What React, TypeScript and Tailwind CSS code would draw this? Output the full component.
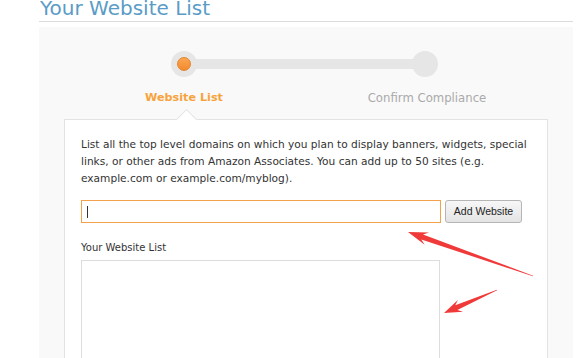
import React from "react";

function arrowPoints(tx: number, ty: number, hx: number, hy: number, headLen: number, headHalf: number, shaftHalf: number) {
  const dx = hx - tx;
  const dy = hy - ty;
  const len = Math.hypot(dx, dy);
  const ux = dx / len;
  const uy = dy / len;
  const nx = -uy;
  const ny = ux;
  const bx = hx - ux * headLen;
  const by = hy - uy * headLen;
  const sx = hx - ux * headLen * 0.75;
  const sy = hy - uy * headLen * 0.75;
  const pts = [
    [hx, hy],
    [bx + nx * headHalf, by + ny * headHalf],
    [sx + nx * shaftHalf, sy + ny * shaftHalf],
    [tx + nx * 0.3, ty + ny * 0.3],
    [tx - nx * 0.3, ty - ny * 0.3],
    [sx - nx * shaftHalf, sy - ny * shaftHalf],
    [bx - nx * headHalf, by - ny * headHalf],
  ];
  return pts.map((p) => `${p[0].toFixed(1)},${p[1].toFixed(1)}`).join(" ");
}

export default function App() {
  return (
    <div className="relative w-[587px] h-[358px] overflow-hidden bg-white" style={{ fontFamily: '"DejaVu Sans", Verdana, sans-serif' }}>
      <div className="ml-[39px] w-[534px]">
        <div className="h-[22px] border-b border-[#dcdcdc] overflow-hidden">
          <h1 className="-mt-[4px] text-[20px] leading-[24px] text-[#5a9cc6] pl-[1px]">Your Website List</h1>
        </div>
        <div className="mt-[5px] bg-[#f9f9f9] h-[400px] pt-[24px]">
          {/* stepper */}
          <div className="flex items-center pl-[132px]">
            <div className="w-[26px] h-[26px] rounded-full bg-[#e6e6e6] flex items-center justify-center">
              <div className="w-[14px] h-[14px] rounded-full bg-gradient-to-b from-[#fba650] to-[#f38a2c] border border-[#e0862e]" />
            </div>
            <div className="w-[217px] h-[10px] bg-[#e6e6e6] -mx-[1px]" />
            <div className="w-[26px] h-[26px] rounded-full bg-[#e6e6e6]" />
          </div>
          <div className="flex mt-[13px] pl-[75px] gap-[103px]">
            <div className="w-[140px] text-center text-[11.2px] leading-[16px] font-bold text-[#f7a33c]">Website List</div>
            <div className="w-[140px] text-center text-[11.7px] leading-[16px] text-[#aaaaaa]">Confirm Compliance</div>
          </div>
          {/* card */}
          <div className="relative ml-[25px] w-[484px] mt-[13px] bg-white border border-[#e3e3e3] pl-[16px] pt-[16px] h-[300px]">
            <div className="absolute -top-[8px] left-[114px] w-[15px] h-[15px] rotate-45 bg-white border-t border-l border-[#e3e3e3]" />
            <p className="relative text-[10.6px] leading-[17px] text-[#333333] w-[462px]">
              List all the top level domains on which you plan to display banners, widgets, special links, or other ads from Amazon Associates. You can add up to 50 sites (e.g. example.com or example.com/myblog).
            </p>
            <div className="flex items-center mt-[13px] gap-[4px]">
              <div className="w-[360px] h-[23px] border border-[#f5a04a] bg-white flex items-center pl-[5px]">
                <div className="w-[1px] h-[12px] bg-[#333333]" />
              </div>
              <button className="w-[77px] h-[23px] rounded-[3px] border border-[#b5b5b5] bg-gradient-to-b from-[#f7f7f7] to-[#e4e4e4] text-[10.5px] text-[#222222]" style={{ fontFamily: '"Liberation Sans", Arial, sans-serif' }}>
                Add Website
              </button>
            </div>
            <div className="mt-[17px] text-[10px] leading-[15px] text-[#333333]">Your Website List</div>
            <div className="mt-[5px] w-[359px] h-[140px] border border-[#dddddd] bg-white" />
          </div>
        </div>
      </div>
      <svg className="absolute inset-0 pointer-events-none" width="587" height="358">
        <polygon points={arrowPoints(533, 276, 408, 232, 20, 6.5, 2.6)} fill="#f03a3a" />
        <polygon points={arrowPoints(497, 290, 444, 313, 18, 6.5, 2.6)} fill="#f03a3a" />
      </svg>
    </div>
  );
}
